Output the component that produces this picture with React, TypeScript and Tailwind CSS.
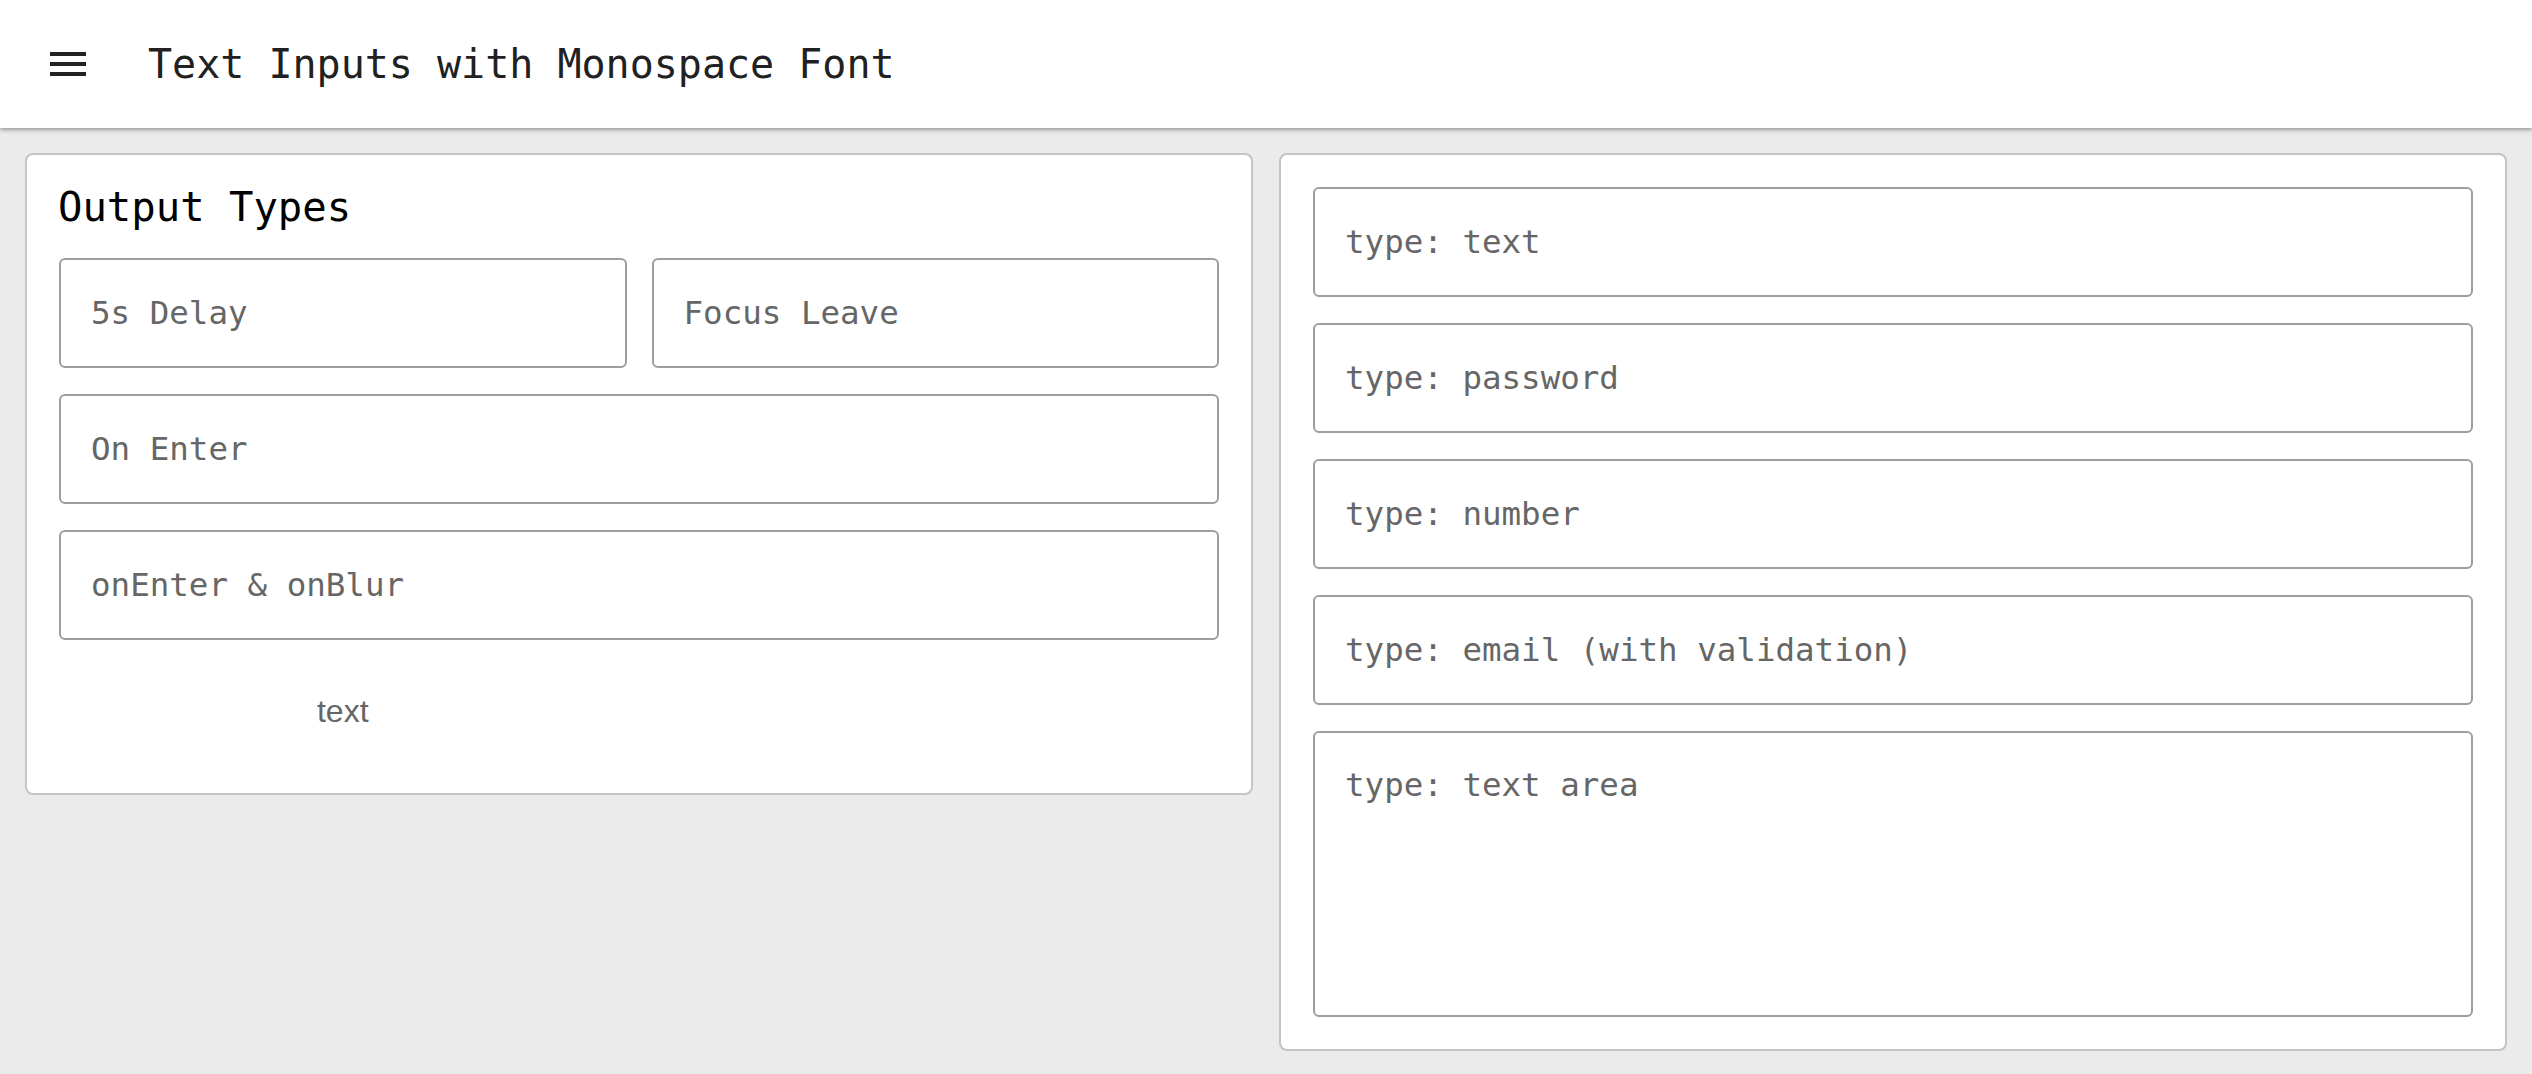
import React from 'react';

const mono = { fontFamily: '"DejaVu Sans Mono", "Liberation Mono", monospace' };

const MenuIcon: React.FC = () => (
  <svg width="48" height="48" viewBox="0 0 24 24" fill="#222">
    <path d="M3 18h18v-2H3v2zm0-5h18v-2H3v2zm0-7v2h18V6H3z" />
  </svg>
);

const Field: React.FC<{ placeholder: string; type?: string }> = ({ placeholder, type = 'text' }) => (
  <input
    type={type}
    placeholder={placeholder}
    style={mono}
    className="h-[110px] w-full rounded-[6px] border-2 border-[#9e9e9e] bg-white px-[30px] text-[32.5px] text-[#333] outline-none placeholder:text-[#666]"
  />
);

const RIGHT_FIELDS = [
  { placeholder: 'type: text', type: 'text' },
  { placeholder: 'type: password', type: 'password' },
  { placeholder: 'type: number', type: 'number' },
  { placeholder: 'type: email (with validation)', type: 'email' },
];

export default function App() {
  return (
    <div className="min-h-screen bg-[#ebebeb]">
      <header className="relative z-10 flex h-[128px] items-center bg-white pl-[44px] shadow-[0_2px_4px_rgba(0,0,0,0.35)]">
        <MenuIcon />
        <h1 style={mono} className="ml-[56px] text-[40px] leading-[46px] text-[#212121]">
          Text Inputs with Monospace Font
        </h1>
      </header>

      <main className="grid grid-cols-2 items-start gap-[26px] p-[25px]">
        <section className="rounded-[8px] border-2 border-[#c4c4c4] bg-white p-[32px]">
          <h2 style={mono} className="-ml-[1px] mb-[31px] text-[40.6px] leading-[40px] text-black">
            Output Types
          </h2>
          <div className="grid grid-cols-2 gap-x-[25px] gap-y-[26px]">
            <Field placeholder="5s Delay" />
            <Field placeholder="Focus Leave" />
            <div className="col-span-2">
              <Field placeholder="On Enter" />
            </div>
            <div className="col-span-2">
              <Field placeholder="onEnter & onBlur" />
            </div>
          </div>
          <div className="grid grid-cols-2 gap-x-[25px]">
            <p
              style={{ fontFamily: '"Liberation Sans", Arial, sans-serif' }}
              className="mt-[53px] mb-[31px] text-center text-[32px] leading-[37px] text-[#666]"
            >
              text
            </p>
          </div>
        </section>

        <section className="flex flex-col gap-[26px] rounded-[8px] border-2 border-[#c4c4c4] bg-white p-[32px]">
          {RIGHT_FIELDS.map((f) => (
            <Field key={f.placeholder} placeholder={f.placeholder} type={f.type} />
          ))}
          <textarea
            placeholder="type: text area"
            style={mono}
            className="h-[286px] w-full resize-none rounded-[6px] border-2 border-[#9e9e9e] bg-white px-[30px] pt-[34px] text-[32.5px] leading-[37px] text-[#333] outline-none placeholder:text-[#666]"
          />
        </section>
      </main>
    </div>
  );
}
